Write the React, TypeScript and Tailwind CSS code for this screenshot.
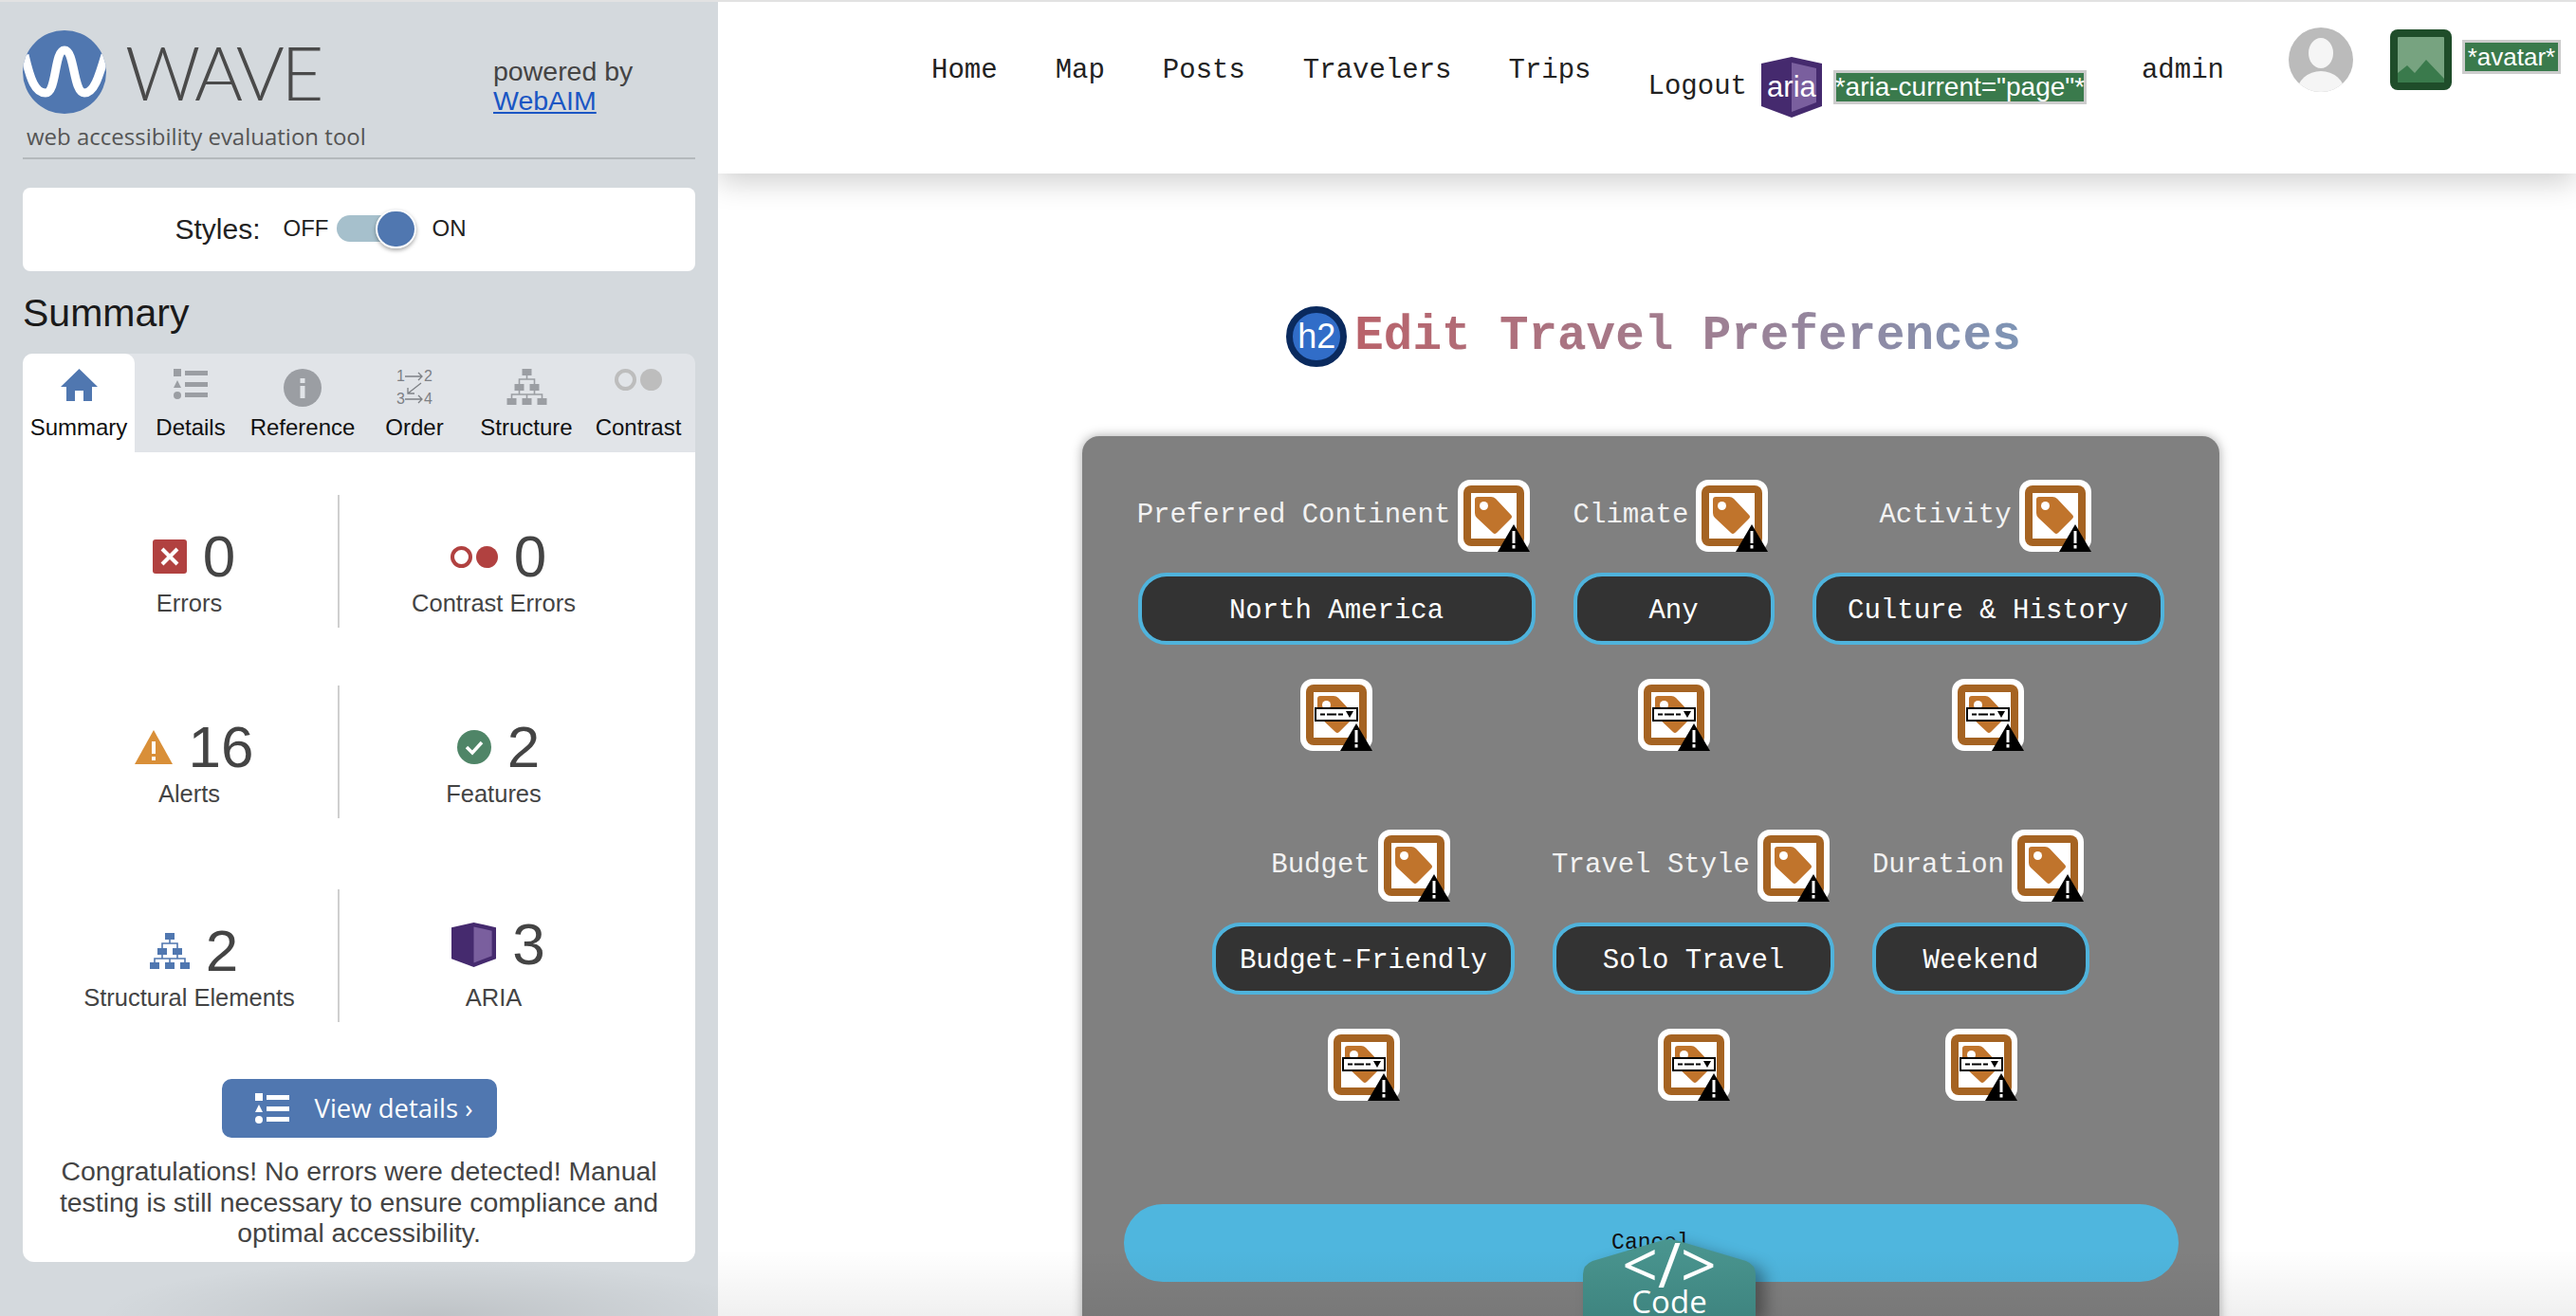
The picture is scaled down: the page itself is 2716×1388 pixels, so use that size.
import React from 'react';

const SANS = "font-['Liberation_Sans',Arial,sans-serif]";

function TagIcon({ select = false }: { select?: boolean }) {
  return (
    <svg width="76" height="76" viewBox="0 0 76 76" className="shrink-0">
      <rect x="0" y="0" width="76" height="76" rx="13" fill="#fff" />
      <rect x="6" y="6" width="64" height="64" rx="8" fill="#a56322" />
      <rect x="14" y="14" width="48" height="48" fill="#fff" />
      <path d="M21 18 L35 18 Q38 18 40 20 L56 37 Q58 39 56 41 L41 56 Q39 58 37 56 L20 40 Q18 38 18 35 L18 21 Q18 18 21 18 Z" fill="#c0742c" />
      <circle cx="27.5" cy="27.5" r="4.5" fill="#fff" />
      {select && (
        <g>
          <rect x="16" y="31" width="44" height="13" fill="#fff" stroke="#000" strokeWidth="2" />
          <path d="M21 37.5h5M28 37.5h10M40 37.5h5" stroke="#000" strokeWidth="2" />
          <path d="M48 34h8l-4 7z" fill="#000" />
        </g>
      )}
      <path d="M59 47 L76 76 L42 76 Z" fill="#000" />
      <rect x="57.5" y="54" width="3" height="13" fill="#fff" />
      <rect x="57.5" y="69" width="3" height="3.5" fill="#fff" />
    </svg>
  );
}

function AriaShape({ size }: { size: number }) {
  return (
    <svg width={size} height={size} viewBox="0 0 64 64" className="shrink-0">
      <path d="M0 7 L32 0 L64 7 L64 52 L32 64 L0 52 Z" fill="#452a6e" />
      <path d="M32 6 L58 12 L58 48 L32 58 Z" fill="#7a5f9e" />
    </svg>
  );
}

function StructureIcon({ color, w, h }: { color: string; w: number; h: number }) {
  return (
    <svg width={w} height={h} viewBox="0 0 42 38" className="shrink-0">
      <g fill={color}>
        <rect x="16" y="0" width="10" height="7" />
        <rect x="8" y="16" width="10" height="7" />
        <rect x="24" y="16" width="10" height="7" />
        <rect x="0" y="31" width="10" height="7" />
        <rect x="16" y="31" width="10" height="7" />
        <rect x="32" y="31" width="10" height="7" />
      </g>
      <path d="M21 7v4M13 16v-5h16v5M13 23v4.500M29 23v4.500M5 31v-4h32v4M21 27v4" stroke={color} strokeWidth="1.600" fill="none" />
    </svg>
  );
}

function ListIcon({ color }: { color: string }) {
  return (
    <svg width="36" height="32" viewBox="0 0 36 32" className="shrink-0">
      <g fill={color}>
        <rect x="0" y="0" width="8" height="8" />
        <path d="M4 12 L8 20 L0 20 Z" />
        <circle cx="4" cy="28" r="4" />
        <rect x="12" y="2" width="24" height="5" />
        <rect x="12" y="14" width="24" height="5" />
        <rect x="12" y="25" width="24" height="5" />
      </g>
    </svg>
  );
}

function ContrastIcon({ color, w }: { color: string; w: number }) {
  return (
    <svg width={w} height={w * 0.46} viewBox="0 0 50 23" className="shrink-0">
      <circle cx="11.500" cy="11.500" r="9.500" fill="none" stroke={color} strokeWidth="4" />
      <circle cx="38.500" cy="11.500" r="11.500" fill={color} />
    </svg>
  );
}

function Stat({
  icon,
  value,
  label,
  divider = false,
  lift = false,
}: {
  icon: React.ReactNode;
  value: string;
  label: string;
  divider?: boolean;
  lift?: boolean;
}) {
  return (
    <div className={`h-[140px] flex flex-col items-center pt-[40px] ${divider ? 'border-l-2 border-[#cfcfcf]' : ''}`}>
      <div className={`flex items-center gap-[17px] pl-[10px] h-[50px] ${lift ? '-translate-y-[7px]' : ''}`}>
        {icon}
        <span className="text-[62px] leading-[50px] text-[#444]">{value}</span>
      </div>
      <div className="mt-[9px] text-[25.500px] leading-[30px] text-[#444]">{label}</div>
    </div>
  );
}

const tabs = [
  {
    name: 'Summary',
    icon: (
      <svg width="39" height="34" viewBox="0 0 39 34">
        <path d="M19.500 0 L39 19 L33 19 L33 34 L24 34 L24 23 L15 23 L15 34 L6 34 L6 19 L0 19 Z" fill="#5077b0" />
      </svg>
    ),
  },
  { name: 'Details', icon: <ListIcon color="#9b9ea3" /> },
  {
    name: 'Reference',
    icon: (
      <svg width="40" height="40" viewBox="0 0 40 40">
        <circle cx="20" cy="20" r="20" fill="#9b9ea3" />
        <rect x="17.500" y="10" width="5" height="5" fill="#e1e4e8" />
        <rect x="17.500" y="18" width="5" height="13" fill="#e1e4e8" />
      </svg>
    ),
  },
  {
    name: 'Order',
    icon: (
      <svg width="38" height="38" viewBox="0 0 38 38" className="font-['Liberation_Sans',sans-serif]">
        <text x="0" y="13" fontSize="16" fill="#7d8085">1</text>
        <text x="29" y="13" fontSize="16" fill="#7d8085">2</text>
        <text x="0" y="37" fontSize="16" fill="#7d8085">3</text>
        <text x="29" y="37" fontSize="16" fill="#7d8085">4</text>
        <path d="M9 8h18M23 4l4 4-4 4M9 32h18M23 28l4 4-4 4M26 15 L12 26M12 20v6h7" stroke="#7d8085" strokeWidth="1.300" fill="none" />
      </svg>
    ),
  },
  { name: 'Structure', icon: <StructureIcon color="#9b9ea3" w={43} h={38} /> },
  { name: 'Contrast', icon: <ContrastIcon color="#bdbdbd" w={50} /> },
];

const rowOne = [
  { label: 'Preferred Continent', value: 'North America', width: 'w-[419px]' },
  { label: 'Climate', value: 'Any', width: 'w-[212px]' },
  { label: 'Activity', value: 'Culture & History', width: 'w-[371px]' },
];

const rowTwo = [
  { label: 'Budget', value: 'Budget-Friendly', width: 'w-[319px]' },
  { label: 'Travel Style', value: 'Solo Travel', width: 'w-[297px]' },
  { label: 'Duration', value: 'Weekend', width: 'w-[229px]' },
];

function Field({ label, value, width }: { label: string; value: string; width: string }) {
  return (
    <div className="flex flex-col items-center">
      <div className="flex items-center gap-2 -translate-x-[3px]">
        <span className="text-[29px] text-[#f2f2f2] whitespace-nowrap">{label}</span>
        <TagIcon />
      </div>
      <div
        className={`${width} h-[76px] mt-[22px] pt-[6px] flex items-center justify-center rounded-[30px] border-4 border-[#4fb3dc] bg-[#333] text-[29px] text-white whitespace-nowrap`}
      >
        {value}
      </div>
      <div className="mt-[36px]">
        <TagIcon select />
      </div>
    </div>
  );
}

export default function App() {
  return (
    <div className="flex h-screen w-full overflow-hidden border-t-2 border-[#e2e2e2] bg-white">
      {/* wave sidebar */}
      <aside className={`relative w-[757px] shrink-0 bg-[#d4d9dd] px-6 ${SANS}`}>
        <div className="flex pt-[30px]">
          <div className="w-[496px]">
            <div className="flex items-center gap-5">
              <svg width="88" height="88" viewBox="0 0 88 88" className="shrink-0">
                <defs>
                  <clipPath id="logoClip">
                    <circle cx="44" cy="44" r="44" />
                  </clipPath>
                </defs>
                <circle cx="44" cy="44" r="44" fill="#5077b0" />
                <path
                  d="M2 26 C8 52 13 66 24 66 C36 66 33 21 44 21 C55 21 53 66 65 66 C75 66 80 50 87 26"
                  fill="none"
                  stroke="#fff"
                  strokeWidth="9"
                  clipPath="url(#logoClip)"
                />
              </svg>
              <span className="font-['Lato',sans-serif] font-light text-[78px] leading-[88px] tracking-[-3.500px] text-[#4a4a4a]">WAVE</span>
            </div>
            <div className="pl-1 mt-[8px] font-['Open_Sans',sans-serif] text-[24px] leading-[32px] text-[#555]">
              web accessibility evaluation tool
            </div>
          </div>
          <div className="pt-[28px] text-[28.500px] leading-[31px] text-[#444]">
            <div>powered by</div>
            <a className="text-[#1a56c4] underline">WebAIM</a>
          </div>
        </div>
        <div className="mt-[6px] h-[2px] bg-[#b4b9bc]" />

        <div className="mt-[30px] h-[88px] flex items-center justify-center rounded-lg bg-white pr-[81px] pb-[2px]">
          <span className="text-[30px] text-[#222] mr-6">Styles:</span>
          <span className="text-[24px] text-[#222]">OFF</span>
          <div className="relative ml-[8px] mr-[17px] h-[28px] w-[84px]">
            <div className="h-full w-full rounded-full bg-[#a6c0cc]" />
            <div className="absolute right-0 -top-[6px] h-[41px] w-[43px] rounded-full border-2 border-white bg-[#5077b0] shadow-[0_2px_4px_rgba(0,0,0,0.35)]" />
          </div>
          <span className="text-[24px] text-[#222]">ON</span>
        </div>

        <h2 className="mt-[19px] text-[41px] leading-[50px] text-[#1a1a1a]">Summary</h2>

        <div className="mt-[18px] flex h-[104px] rounded-t-[10px] bg-[#e1e4e8]">
          {tabs.map((t, i) => (
            <div
              key={t.name}
              className={`w-[118px] flex flex-col items-center ${i === 0 ? 'rounded-t-[10px] bg-white' : ''}`}
            >
              <div className="h-[63px] pt-[16px] flex items-start justify-center">{t.icon}</div>
              <div className="text-[24px] leading-[30px] text-[#111] whitespace-nowrap">{t.name}</div>
            </div>
          ))}
        </div>

        <div className="h-[854px] rounded-b-[12px] bg-white">
          <div className="ml-[19px] grid grid-cols-[313px_327px] pt-[45px]">
            <Stat
              label="Errors"
              value="0"
              icon={
                <svg width="36" height="36" viewBox="0 0 36 36" className="shrink-0">
                  <rect width="36" height="36" rx="3" fill="#b14140" />
                  <path d="M10 10 L26 26 M26 10 L10 26" stroke="#fff" strokeWidth="4" />
                </svg>
              }
            />
            <Stat label="Contrast Errors" value="0" divider icon={<ContrastIcon color="#b14140" w={50} />} />
          </div>
          <div className="ml-[19px] grid grid-cols-[313px_327px] pt-[61px]">
            <Stat
              label="Alerts"
              value="16"
              icon={
                <svg width="40" height="36" viewBox="0 0 40 36" className="shrink-0">
                  <path d="M20 0 L40 36 L0 36 Z" fill="#d98f38" />
                  <rect x="18" y="12" width="4" height="13" fill="#fff" />
                  <rect x="18" y="28" width="4" height="4" fill="#fff" />
                </svg>
              }
            />
            <Stat
              label="Features"
              value="2"
              divider
              icon={
                <svg width="36" height="36" viewBox="0 0 36 36" className="shrink-0">
                  <circle cx="18" cy="18" r="18" fill="#4f8567" />
                  <path d="M10 18 L16 24 L26 13" stroke="#fff" strokeWidth="3.500" fill="none" />
                </svg>
              }
            />
          </div>
          <div className="ml-[19px] grid grid-cols-[313px_327px] pt-[75px]">
            <Stat label="Structural Elements" value="2" icon={<StructureIcon color="#5077b0" w={42} h={38} />} />
            <Stat label="ARIA" value="3" divider lift icon={<AriaShape size={47} />} />
          </div>

          <div className="mt-[60px] flex justify-center">
            <div className="flex h-[62px] w-[290px] items-center gap-[27px] rounded-[10px] bg-[#5077b0] pl-[35px] font-['Open_Sans',sans-serif] text-[27.500px] text-white">
              <ListIcon color="#fff" />
              <span className="whitespace-nowrap">View details ›</span>
            </div>
          </div>
          <p className="mt-[19px] px-[30px] text-center text-[28.400px] leading-[32.500px] text-[#444]">
            Congratulations! No errors were detected! Manual testing is still necessary to ensure compliance and optimal
            accessibility.
          </p>
        </div>
        <div className="absolute bottom-0 left-[100px] h-[60px] w-[657px] bg-[radial-gradient(ellipse_at_55%_100%,rgba(0,0,0,0.1),transparent_70%)]" />
      </aside>

      {/* page under test */}
      <main className="relative flex-1 overflow-hidden font-['Liberation_Mono',monospace] text-[#222]">
        <nav className="relative z-10 h-[181px] bg-white pl-[225px] pt-[55px] shadow-[0_8px_30px_rgba(0,0,0,0.2)]">
          <div className="flex items-start text-[29px] leading-[36px]">
            <span>Home</span>
            <span className="ml-[61px]">Map</span>
            <span className="ml-[61px]">Posts</span>
            <span className="ml-[61px]">Travelers</span>
            <span className="ml-[60px]">Trips</span>
            <div className="ml-[60px] mt-[3px] flex items-center">
              <span>Logout</span>
              <div className="relative ml-[15px]">
                <AriaShape size={64} />
                <span className={`absolute inset-0 flex items-center justify-center text-[31px] text-white ${SANS}`}>aria</span>
              </div>
              <span className={`ml-[12px] flex h-[36px] w-[267px] items-center justify-center whitespace-nowrap border-[3px] border-[#ccc] bg-[#3a7a4c] text-[28px] text-white ${SANS}`}>
                *aria-current="page"*
              </span>
            </div>
            <span className="ml-[58px]">admin</span>
            <svg width="68" height="68" viewBox="0 0 68 68" className="ml-[68px] -mt-[28px] shrink-0">
              <defs>
                <clipPath id="avatarClip">
                  <circle cx="34" cy="34" r="34" />
                </clipPath>
              </defs>
              <circle cx="34" cy="34" r="34" fill="#bbb" />
              <g clipPath="url(#avatarClip)" fill="#f5f5f5">
                <ellipse cx="34" cy="27" rx="13" ry="16" />
                <ellipse cx="34" cy="68" rx="25" ry="22" />
              </g>
            </svg>
            <svg width="65" height="64" viewBox="0 0 65 64" className="ml-[39px] -mt-[26px] shrink-0">
              <rect width="65" height="64" rx="8" fill="#1f4d2a" />
              <rect x="8" y="8" width="49" height="48" rx="1" fill="#77a380" />
              <path d="M8 46 L18 38 L26 46 L38 32 L57 52 L57 56 L8 56 Z" fill="#3a7a4c" />
            </svg>
            <span className={`ml-[11px] -mt-[15px] flex h-[36px] w-[104px] items-center justify-center whitespace-nowrap border-[3px] border-[#ccc] bg-[#3a7a4c] text-[26px] text-white ${SANS}`}>
              *avatar*
            </span>
          </div>
        </nav>

        <div className="flex items-center justify-center gap-2 pl-[14px] pt-[140px]">
          <div className={`flex h-[64px] w-[64px] items-center justify-center rounded-full border-[7px] border-[#0a2a5e] bg-[#316dc8] text-[36px] text-white ${SANS}`}>
            h2
          </div>
          <h1 className="bg-linear-to-r from-[#b9626a] to-[#7d94b5] bg-clip-text text-[50.900px] font-bold leading-[64px] text-transparent whitespace-nowrap">
            Edit Travel Preferences
          </h1>
        </div>

        <div className="pl-[8px]">
          <form className="mx-auto mt-[73px] h-[1000px] w-[1199px] rounded-[18px] bg-[#808080] pt-[46px] shadow-[0_0_12px_rgba(0,0,0,0.35)]">
            <div className="flex justify-center gap-10">
              {rowOne.map((f) => (
                <Field key={f.label} {...f} />
              ))}
            </div>
            <div className="mt-[83px] flex justify-center gap-10">
              {rowTwo.map((f) => (
                <Field key={f.label} {...f} />
              ))}
            </div>
            <div className="mx-auto mt-[109px] flex h-[82px] w-[1112px] items-center justify-center rounded-full bg-[#4fb6de] text-[23px] text-[#111]">
              Cancel
            </div>
          </form>
        </div>

        <div className="pointer-events-none absolute bottom-0 left-0 right-0 h-[70px] bg-linear-to-t from-black/6 to-transparent" />

        {/* code panel tab */}
        <div className="absolute bottom-0 left-[912px] h-[81px] w-[182px] overflow-visible font-['Open_Sans',sans-serif] text-white">
          <svg width="182" height="81" viewBox="0 0 182 81" className="absolute inset-0 overflow-visible drop-shadow-[10px_6px_8px_rgba(0,0,0,0.35)]">
            <defs>
              <linearGradient id="codeFill" x1="0" y1="0" x2="0" y2="1">
                <stop offset="0" stopColor="#4a9690" />
                <stop offset="1" stopColor="#3f8580" />
              </linearGradient>
            </defs>
            <path d="M0 37 Q0 27 10 23 L84 1 Q91 -1 98 1 L172 23 Q182 27 182 37 V81 H0 Z" fill="url(#codeFill)" />
          </svg>
          <div className="relative flex flex-col items-center">
            <span className="text-[66px] leading-[50px]">&lt;/&gt;</span>
            <span className="-mt-[2px] text-[33px] leading-[36px]">Code</span>
          </div>
        </div>
      </main>
    </div>
  );
}
